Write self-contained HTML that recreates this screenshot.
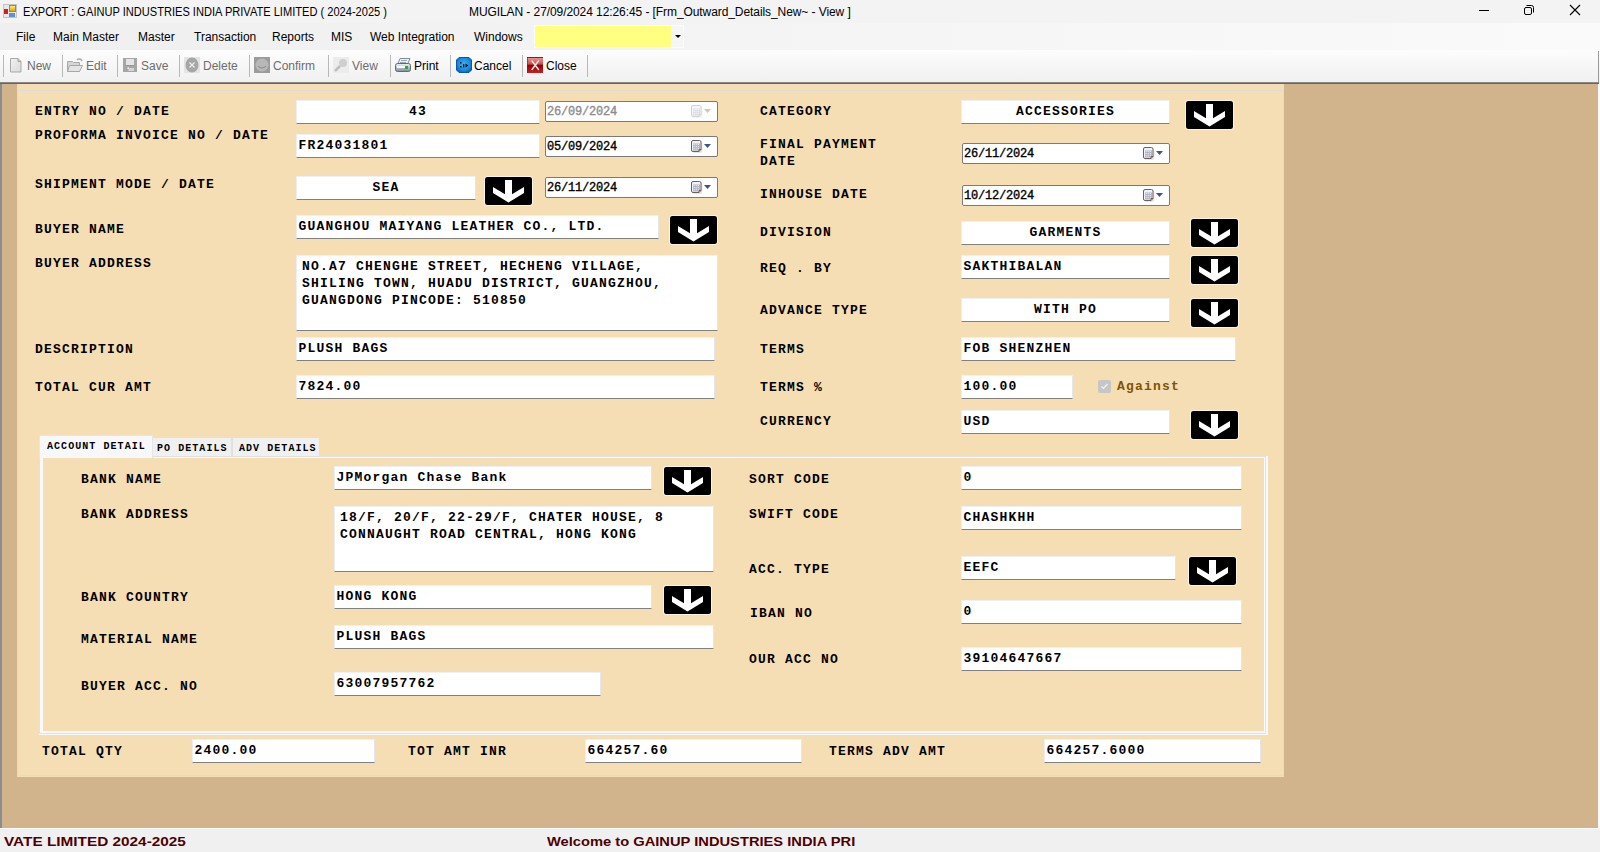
<!DOCTYPE html><html><head><meta charset="utf-8"><style>
*{box-sizing:border-box}
html,body{margin:0;padding:0;width:1600px;height:852px;overflow:hidden;background:#f0f0f0;position:relative}
div{position:absolute}
.lbl,.val{font-family:"Liberation Mono",monospace;font-weight:bold;font-size:13px;letter-spacing:1.2px;line-height:20px;white-space:pre;color:#000}
.tb{background:#fff;border-top:1px solid #eef0f3;border-left:1px solid #eceef2;border-right:1px solid #e3e7ed;border-bottom:1px solid #808080;border-radius:1px}
.btn{background:#000;background-clip:padding-box;border-radius:3px;border:1px solid rgba(255,255,255,0.6)}
.btn svg{position:absolute;left:-1px;top:-1px}
.dt{background:#fff;border:1px solid #7a7a7a;border-radius:2px}
.dtx{position:absolute;left:1px;top:0px;font-family:"Liberation Mono",monospace;font-weight:normal;-webkit-text-stroke:0.35px currentColor;font-size:12px;letter-spacing:-0.2px;line-height:20px;white-space:pre}
.cal{position:absolute;right:4px;top:3px;width:22px;height:14px}
.cal svg{display:block}
.ui{font-family:"Liberation Sans",sans-serif;font-size:12px;line-height:16px;white-space:pre;color:#000}
.ti{letter-spacing:-0.48px}
.ti2{letter-spacing:-0.08px}
.sep{width:1px;background:#b8b8b8;top:55px;height:22px}
.tbi{top:57px;width:16px;height:16px}
.tbt{top:58px;font-family:"Liberation Sans",sans-serif;font-size:12px;line-height:16px;white-space:pre}
.dis{color:#6d6d6d}
.st{font-family:"Liberation Sans",sans-serif;font-weight:bold;font-size:13px;line-height:16px;white-space:pre;color:#4e0000}
.tab{font-family:"Liberation Mono",monospace;font-weight:bold;font-size:10px;line-height:14px;white-space:pre;color:#000;letter-spacing:1.06px}
</style></head><body>

<div style="left:0;top:0;width:1600px;height:23px;background:#f3f3f3"></div>
<div style="left:3px;top:4px;width:14px;height:14px;background:#e8e8e8;border:1px solid #c4c4c4"></div>
<div style="left:9px;top:5px;width:7px;height:7px;background:linear-gradient(#ffe98a,#e0a800);border:1px solid #b98a00"></div>
<div style="left:4px;top:9px;width:4px;height:5px;background:#cc2222"></div>
<div style="left:9px;top:13px;width:6px;height:4px;background:#5b8fe0"></div>
<div class="ui" style="left:23px;top:4px;transform:scaleX(0.923);transform-origin:0 0">EXPORT : GAINUP INDUSTRIES INDIA PRIVATE LIMITED ( 2024-2025 )</div>
<div class="ui ti2" style="left:469px;top:4px">MUGILAN - 27/09/2024 12:26:45 - [Frm_Outward_Details_New~ - View ]</div>
<div style="left:1479px;top:10px;width:10px;height:1px;background:#000"></div>
<svg style="position:absolute;left:1523px;top:4px" width="12" height="12" viewBox="0 0 12 12"><rect x="1.5" y="3.5" width="7" height="7" rx="1.5" fill="none" stroke="#000"/><path d="M3.5 1.5h5a2 2 0 0 1 2 2v5" fill="none" stroke="#000"/></svg>
<svg style="position:absolute;left:1569px;top:4px" width="12" height="12" viewBox="0 0 12 12"><path d="M1 1l10 10M11 1L1 11" stroke="#000" stroke-width="1.1"/></svg>
<div style="left:0;top:23px;width:1600px;height:27px;background:linear-gradient(to right,#efefef,#fafafa)"></div>
<div class="ui" style="left:16px;top:29px">File</div>
<div class="ui" style="left:53px;top:29px">Main Master</div>
<div class="ui" style="left:138px;top:29px">Master</div>
<div class="ui" style="left:194px;top:29px">Transaction</div>
<div class="ui" style="left:272px;top:29px">Reports</div>
<div class="ui" style="left:331px;top:29px">MIS</div>
<div class="ui" style="left:370px;top:29px">Web Integration</div>
<div class="ui" style="left:474px;top:29px">Windows</div>
<div style="left:534px;top:25px;width:150px;height:23px;background:#fcfcfc"></div>
<div style="left:535px;top:26px;width:136px;height:21px;background:#ffff80"></div>
<div style="left:671px;top:26px;width:12px;height:21px;background:#f6f6f6"></div>
<svg style="position:absolute;left:675px;top:35px" width="6" height="3"><path d="M0 0h6L3 3z" fill="#000"/></svg>
<div style="left:0;top:50px;width:1600px;height:32px;background:linear-gradient(#fdfdfd,#f0f0f0)"></div>
<div style="left:0;top:82px;width:1599px;height:1px;background:#8a8a8a"></div>
<div style="left:0;top:83px;width:1599px;height:1px;background:#646464"></div>
<div style="left:1598px;top:51px;width:1px;height:31px;background:#9a9a9a"></div>
<div class="sep" style="left:3px"></div>
<div class="sep" style="left:62px"></div>
<div class="sep" style="left:117px"></div>
<div class="sep" style="left:179px"></div>
<div class="sep" style="left:249px"></div>
<div class="sep" style="left:328px"></div>
<div class="sep" style="left:390px"></div>
<div class="sep" style="left:450px"></div>
<div class="sep" style="left:522px"></div>
<div class="sep" style="left:587px"></div>
<div class="tbi" style="left:10px"><svg width="16" height="16"><defs><linearGradient id="ng" x1="0" y1="0" x2="1" y2="1"><stop offset="0" stop-color="#f2f2f2"/><stop offset="1" stop-color="#d9d9d9"/></linearGradient></defs><path d="M.5 1.5h7.5l3 3v10.5H.5z" fill="url(#ng)" stroke="#a9a9a9"/><path d="M8 1.5v3h3" fill="#cfcfcf" stroke="#a0a0a0"/></svg></div>
<div class="tbt dis" style="left:27px">New</div>
<div class="tbi" style="left:67px"><svg width="16" height="16"><path d="M.5 4.5h5l1 1h6v9h-12z" fill="#d6d6d6" stroke="#a8a8a8"/><path d="M2.5 8.5h13l-3 6h-12z" fill="#e4e4e4" stroke="#a8a8a8"/><path d="M10 3a3 3 0 0 1 5 1" stroke="#aaa" fill="none" stroke-width="1.5"/></svg></div>
<div class="tbt dis" style="left:86px">Edit</div>
<div class="tbi" style="left:123px"><svg width="16" height="16"><rect x="0" y="1" width="14" height="14" fill="#a6a6a6"/><rect x="3" y="2" width="8" height="6" fill="#e4e4e4"/><rect x="2.5" y="8" width="9" height="1" fill="#999"/><path d="M5 14l2-3h4v3z" fill="#d6d6d6"/><circle cx="5.3" cy="11.3" r="1" fill="#f4f4f4"/></svg></div>
<div class="tbt dis" style="left:141px">Save</div>
<div class="tbi" style="left:184px"><svg width="16" height="16"><rect width="16" height="16" fill="#e4e4e4"/><ellipse cx="8" cy="8" rx="6.5" ry="7.5" fill="#a6a6a6"/><path d="M5.5 5.5l5 5M10.5 5.5l-5 5" stroke="#eee" stroke-width="1.2"/></svg></div>
<div class="tbt dis" style="left:203px">Delete</div>
<div class="tbi" style="left:254px"><svg width="16" height="16"><rect width="16" height="16" fill="#9b9b9b"/><circle cx="8" cy="8" r="6.5" fill="#b8b8b8"/><path d="M4 9q4 4 8 0" stroke="#8a8a8a" fill="none"/></svg></div>
<div class="tbt dis" style="left:273px">Confirm</div>
<div class="tbi" style="left:333px"><svg width="16" height="16"><rect width="16" height="16" fill="#ececec"/><circle cx="10" cy="6" r="4" fill="#cfcfcf"/><path d="M7 9l-5 5" stroke="#bdbdbd" stroke-width="2.5"/></svg></div>
<div class="tbt dis" style="left:352px">View</div>
<div class="tbi" style="left:395px"><svg width="16" height="16"><defs><linearGradient id="pg" x1="0" y1="0" x2="0" y2="1"><stop offset="0" stop-color="#f2f5f8"/><stop offset="1" stop-color="#7f8c9c"/></linearGradient></defs><path d="M5 1.5h10l-2.5 6h-10z" fill="#eef1f5" stroke="#7d8b9b"/><path d="M6 3.5h6M5 5.5h6" stroke="#9aa6b4"/><rect x=".5" y="6.5" width="15" height="8" rx="2" fill="url(#pg)" stroke="#5d6b7b"/><rect x="2" y="9" width="8" height="2" fill="#f8fafc"/><rect x="10" y="9" width="3" height="3" fill="#1eb41e"/></svg></div>
<div class="tbt" style="left:414px">Print</div>
<div class="tbi" style="left:456px"><svg width="16" height="16"><defs><radialGradient id="cg" cx=".5" cy=".45" r=".6"><stop offset="0" stop-color="#3db2f7"/><stop offset=".7" stop-color="#168ae0"/><stop offset="1" stop-color="#0a5bb5"/></radialGradient></defs><path d="M3 .5h10l2.5 2.5v10L13 15.5H3L.5 13V3z" fill="url(#cg)" stroke="#0b56a8"/><rect x="4" y="5" width="1.5" height="1.5" fill="#111"/><rect x="4" y="9" width="1.5" height="1.5" fill="#111"/><rect x="7" y="7" width="1.3" height="3.5" fill="#111"/><path d="M9.5 6.5l3 2-3 2z" fill="#111"/></svg></div>
<div class="tbt" style="left:474px">Cancel</div>
<div class="tbi" style="left:527px"><svg width="16" height="16"><defs><linearGradient id="xg" x1="0" y1="0" x2="0" y2="1"><stop offset="0" stop-color="#f39a9a"/><stop offset=".45" stop-color="#c85050"/><stop offset=".5" stop-color="#8e0000"/><stop offset="1" stop-color="#c42424"/></linearGradient></defs><rect width="16" height="16" fill="url(#xg)"/><rect width="16" height="1" fill="#7a2424"/><rect width="1" height="16" fill="#8a1a1a" opacity=".6"/><path d="M5 4l6.5 8.5M11.5 4L5 12.5" stroke="#f0e4e4" stroke-width="1.5" stroke-linecap="round"/></svg></div>
<div class="tbt" style="left:546px">Close</div>
<div style="left:0;top:84px;width:1598px;height:744px;background:#d2b48c"></div>
<div style="left:0;top:84px;width:2px;height:744px;background:#8c8c8c"></div>
<div style="left:0;top:828px;width:1600px;height:1px;background:#fbfbfc"></div>
<div style="left:1598px;top:84px;width:2px;height:745px;background:#f8f9fb"></div>
<div class="st" style="left:4px;top:834px;transform:scaleX(1.18);transform-origin:0 0">VATE LIMITED 2024-2025</div>
<div class="st" style="left:547px;top:834px;transform:scaleX(1.13);transform-origin:0 0">Welcome to GAINUP INDUSTRIES INDIA PRI</div>
<div style="left:17px;top:84px;width:1267px;height:693px;background:#f5deb3"></div>
<div style="left:17px;top:90px;width:1267px;height:686px;border:1px solid #dcdcdc;border-right-width:1px"></div>
<div class="lbl" style="left:35px;top:102.0px">ENTRY NO / DATE</div>
<div class="lbl" style="left:35px;top:126.0px">PROFORMA INVOICE NO / DATE</div>
<div class="lbl" style="left:35px;top:175.0px">SHIPMENT MODE / DATE</div>
<div class="lbl" style="left:35px;top:220.0px">BUYER NAME</div>
<div class="lbl" style="left:35px;top:254.0px">BUYER ADDRESS</div>
<div class="lbl" style="left:35px;top:340.0px">DESCRIPTION</div>
<div class="lbl" style="left:35px;top:378.0px">TOTAL CUR AMT</div>
<div class="tb" style="left:296px;top:100px;width:244px;height:24px"></div>
<div class="val" style="left:296px;width:244px;text-align:center;top:102.0px">43</div>
<div class="dt" style="left:545px;top:101px;width:173px;height:21px"><span class="dtx" style="color:#8c8c8c">26/09/2024</span><span class="cal"><svg width="22" height="14" viewBox="0 0 22 14"><rect x="1.5" y="2" width="10" height="11" rx="2" fill="#f2f2f2"/><path d="M2 .5h6.5a1.5 1.5 0 0 1 1.5 1.5v7.5l-2 2H2A1.5 1.5 0 0 1 .5 10V2A1.5 1.5 0 0 1 2 .5z" fill="#f6f7fa" stroke="#d2d2d2"/><rect x="2" y="3.5" width="7" height="7" fill="#dcdee4"/><rect x="2.6" y="4.1" width="1" height="1" fill="#ffffff"/><rect x="2.6" y="6.2" width="1" height="1" fill="#ffffff"/><rect x="2.6" y="8.3" width="1" height="1" fill="#ffffff"/><rect x="4.7" y="4.1" width="1" height="1" fill="#ffffff"/><rect x="4.7" y="6.2" width="1" height="1" fill="#ffffff"/><rect x="4.7" y="8.3" width="1" height="1" fill="#ffffff"/><rect x="6.8" y="4.1" width="1" height="1" fill="#ffffff"/><rect x="6.8" y="6.2" width="1" height="1" fill="#ffffff"/><rect x="6.8" y="8.3" width="1" height="1" fill="#ffffff"/><path d="M8 11.5v-2h2" fill="none" stroke="#d2d2d2"/><path d="M13 4h7l-3.5 4z" fill="#c8c8c0"/></svg></span></div>
<div class="tb" style="left:296px;top:134px;width:244px;height:24px"></div>
<div class="val" style="left:298.5px;top:136.0px">FR24031801</div>
<div class="dt" style="left:545px;top:136px;width:173px;height:21px"><span class="dtx" style="color:#000">05/09/2024</span><span class="cal"><svg width="22" height="14" viewBox="0 0 22 14"><rect x="1.5" y="2" width="10" height="11" rx="2" fill="#e6e6e6"/><path d="M2 .5h6.5a1.5 1.5 0 0 1 1.5 1.5v7.5l-2 2H2A1.5 1.5 0 0 1 .5 10V2A1.5 1.5 0 0 1 2 .5z" fill="#eef2fa" stroke="#6e5f5c"/><rect x="2" y="3.5" width="7" height="7" fill="#b0b4c0"/><rect x="2.6" y="4.1" width="1" height="1" fill="#ffffff"/><rect x="2.6" y="6.2" width="1" height="1" fill="#ffffff"/><rect x="2.6" y="8.3" width="1" height="1" fill="#ffffff"/><rect x="4.7" y="4.1" width="1" height="1" fill="#ffffff"/><rect x="4.7" y="6.2" width="1" height="1" fill="#ffffff"/><rect x="4.7" y="8.3" width="1" height="1" fill="#ffffff"/><rect x="6.8" y="4.1" width="1" height="1" fill="#ffffff"/><rect x="6.8" y="6.2" width="1" height="1" fill="#ffffff"/><rect x="6.8" y="8.3" width="1" height="1" fill="#ffffff"/><path d="M8 11.5v-2h2" fill="none" stroke="#6e5f5c"/><path d="M13 4h7l-3.5 4z" fill="#3d5586"/></svg></span></div>
<div class="tb" style="left:296px;top:176px;width:180px;height:24px"></div>
<div class="val" style="left:296px;width:180px;text-align:center;top:178.0px">SEA</div>
<div class="btn" style="left:484px;top:176px;width:49px;height:30px"><svg width="49" height="30" viewBox="0 0 49 30"><path d="M21 4H28V18.3L40 11V17L24.5 26.5L9 17V11L21 18.3Z" fill="#fff"/></svg></div>
<div class="dt" style="left:545px;top:177px;width:173px;height:21px"><span class="dtx" style="color:#000">26/11/2024</span><span class="cal"><svg width="22" height="14" viewBox="0 0 22 14"><rect x="1.5" y="2" width="10" height="11" rx="2" fill="#e6e6e6"/><path d="M2 .5h6.5a1.5 1.5 0 0 1 1.5 1.5v7.5l-2 2H2A1.5 1.5 0 0 1 .5 10V2A1.5 1.5 0 0 1 2 .5z" fill="#eef2fa" stroke="#6e5f5c"/><rect x="2" y="3.5" width="7" height="7" fill="#b0b4c0"/><rect x="2.6" y="4.1" width="1" height="1" fill="#ffffff"/><rect x="2.6" y="6.2" width="1" height="1" fill="#ffffff"/><rect x="2.6" y="8.3" width="1" height="1" fill="#ffffff"/><rect x="4.7" y="4.1" width="1" height="1" fill="#ffffff"/><rect x="4.7" y="6.2" width="1" height="1" fill="#ffffff"/><rect x="4.7" y="8.3" width="1" height="1" fill="#ffffff"/><rect x="6.8" y="4.1" width="1" height="1" fill="#ffffff"/><rect x="6.8" y="6.2" width="1" height="1" fill="#ffffff"/><rect x="6.8" y="8.3" width="1" height="1" fill="#ffffff"/><path d="M8 11.5v-2h2" fill="none" stroke="#6e5f5c"/><path d="M13 4h7l-3.5 4z" fill="#3d5586"/></svg></span></div>
<div class="tb" style="left:296px;top:215px;width:363px;height:24px"></div>
<div class="val" style="left:298.5px;top:217.0px">GUANGHOU MAIYANG LEATHER CO., LTD.</div>
<div class="btn" style="left:669px;top:215px;width:49px;height:30px"><svg width="49" height="30" viewBox="0 0 49 30"><path d="M21 4H28V18.3L40 11V17L24.5 26.5L9 17V11L21 18.3Z" fill="#fff"/></svg></div>
<div class="tb" style="left:296px;top:255px;width:422px;height:76px"></div>
<div class="val" style="left:302px;top:257.0px">NO.A7 CHENGHE STREET, HECHENG VILLAGE,</div>
<div class="val" style="left:302px;top:273.8px">SHILING TOWN, HUADU DISTRICT, GUANGZHOU,</div>
<div class="val" style="left:302px;top:290.6px">GUANGDONG PINCODE: 510850</div>
<div class="tb" style="left:296px;top:337px;width:419px;height:24px"></div>
<div class="val" style="left:298.5px;top:339.0px">PLUSH BAGS</div>
<div class="tb" style="left:296px;top:375px;width:419px;height:24px"></div>
<div class="val" style="left:298.5px;top:377.0px">7824.00</div>
<div class="lbl" style="left:760px;top:102.0px">CATEGORY</div>
<div class="lbl" style="left:760px;top:135.0px">FINAL PAYMENT</div>
<div class="lbl" style="left:760px;top:152.0px">DATE</div>
<div class="lbl" style="left:760px;top:185.0px">INHOUSE DATE</div>
<div class="lbl" style="left:760px;top:223.0px">DIVISION</div>
<div class="lbl" style="left:760px;top:259.0px">REQ . BY</div>
<div class="lbl" style="left:760px;top:301.0px">ADVANCE TYPE</div>
<div class="lbl" style="left:760px;top:340.0px">TERMS</div>
<div class="lbl" style="left:760px;top:378.0px">TERMS %</div>
<div class="lbl" style="left:760px;top:412.0px">CURRENCY</div>
<div class="tb" style="left:961px;top:100px;width:209px;height:24px"></div>
<div class="val" style="left:961px;width:209px;text-align:center;top:102.0px">ACCESSORIES</div>
<div class="btn" style="left:1185px;top:100px;width:49px;height:30px"><svg width="49" height="30" viewBox="0 0 49 30"><path d="M21 4H28V18.3L40 11V17L24.5 26.5L9 17V11L21 18.3Z" fill="#fff"/></svg></div>
<div class="dt" style="left:962px;top:143px;width:208px;height:21px"><span class="dtx" style="color:#000">26/11/2024</span><span class="cal"><svg width="22" height="14" viewBox="0 0 22 14"><rect x="1.5" y="2" width="10" height="11" rx="2" fill="#e6e6e6"/><path d="M2 .5h6.5a1.5 1.5 0 0 1 1.5 1.5v7.5l-2 2H2A1.5 1.5 0 0 1 .5 10V2A1.5 1.5 0 0 1 2 .5z" fill="#eef2fa" stroke="#6e5f5c"/><rect x="2" y="3.5" width="7" height="7" fill="#b0b4c0"/><rect x="2.6" y="4.1" width="1" height="1" fill="#ffffff"/><rect x="2.6" y="6.2" width="1" height="1" fill="#ffffff"/><rect x="2.6" y="8.3" width="1" height="1" fill="#ffffff"/><rect x="4.7" y="4.1" width="1" height="1" fill="#ffffff"/><rect x="4.7" y="6.2" width="1" height="1" fill="#ffffff"/><rect x="4.7" y="8.3" width="1" height="1" fill="#ffffff"/><rect x="6.8" y="4.1" width="1" height="1" fill="#ffffff"/><rect x="6.8" y="6.2" width="1" height="1" fill="#ffffff"/><rect x="6.8" y="8.3" width="1" height="1" fill="#ffffff"/><path d="M8 11.5v-2h2" fill="none" stroke="#6e5f5c"/><path d="M13 4h7l-3.5 4z" fill="#3d5586"/></svg></span></div>
<div class="dt" style="left:962px;top:185px;width:208px;height:21px"><span class="dtx" style="color:#000">10/12/2024</span><span class="cal"><svg width="22" height="14" viewBox="0 0 22 14"><rect x="1.5" y="2" width="10" height="11" rx="2" fill="#e6e6e6"/><path d="M2 .5h6.5a1.5 1.5 0 0 1 1.5 1.5v7.5l-2 2H2A1.5 1.5 0 0 1 .5 10V2A1.5 1.5 0 0 1 2 .5z" fill="#eef2fa" stroke="#6e5f5c"/><rect x="2" y="3.5" width="7" height="7" fill="#b0b4c0"/><rect x="2.6" y="4.1" width="1" height="1" fill="#ffffff"/><rect x="2.6" y="6.2" width="1" height="1" fill="#ffffff"/><rect x="2.6" y="8.3" width="1" height="1" fill="#ffffff"/><rect x="4.7" y="4.1" width="1" height="1" fill="#ffffff"/><rect x="4.7" y="6.2" width="1" height="1" fill="#ffffff"/><rect x="4.7" y="8.3" width="1" height="1" fill="#ffffff"/><rect x="6.8" y="4.1" width="1" height="1" fill="#ffffff"/><rect x="6.8" y="6.2" width="1" height="1" fill="#ffffff"/><rect x="6.8" y="8.3" width="1" height="1" fill="#ffffff"/><path d="M8 11.5v-2h2" fill="none" stroke="#6e5f5c"/><path d="M13 4h7l-3.5 4z" fill="#3d5586"/></svg></span></div>
<div class="tb" style="left:961px;top:221px;width:209px;height:24px"></div>
<div class="val" style="left:961px;width:209px;text-align:center;top:223.0px">GARMENTS</div>
<div class="btn" style="left:1190px;top:218px;width:49px;height:30px"><svg width="49" height="30" viewBox="0 0 49 30"><path d="M21 4H28V18.3L40 11V17L24.5 26.5L9 17V11L21 18.3Z" fill="#fff"/></svg></div>
<div class="tb" style="left:961px;top:255px;width:209px;height:24px"></div>
<div class="val" style="left:963.5px;top:257.0px">SAKTHIBALAN</div>
<div class="btn" style="left:1190px;top:255px;width:49px;height:30px"><svg width="49" height="30" viewBox="0 0 49 30"><path d="M21 4H28V18.3L40 11V17L24.5 26.5L9 17V11L21 18.3Z" fill="#fff"/></svg></div>
<div class="tb" style="left:961px;top:298px;width:209px;height:24px"></div>
<div class="val" style="left:961px;width:209px;text-align:center;top:300.0px">WITH PO</div>
<div class="btn" style="left:1190px;top:298px;width:49px;height:30px"><svg width="49" height="30" viewBox="0 0 49 30"><path d="M21 4H28V18.3L40 11V17L24.5 26.5L9 17V11L21 18.3Z" fill="#fff"/></svg></div>
<div class="tb" style="left:961px;top:337px;width:275px;height:24px"></div>
<div class="val" style="left:963.5px;top:339.0px">FOB SHENZHEN</div>
<div class="tb" style="left:961px;top:375px;width:112px;height:24px"></div>
<div class="val" style="left:963.5px;top:377.0px">100.00</div>
<div style="left:1098px;top:380px;width:13px;height:13px;background:#c6c6c6;border-radius:2px"></div>
<svg style="position:absolute;left:1100px;top:382px" width="9" height="9"><path d="M1.5 4.5l2 2 4-4.5" stroke="#f4f4f4" fill="none" stroke-width="1.2"/></svg>
<div class="lbl" style="left:1117px;top:377px;color:#7f5406">Against</div>
<div class="tb" style="left:961px;top:410px;width:209px;height:24px"></div>
<div class="val" style="left:963.5px;top:412.0px">USD</div>
<div class="btn" style="left:1190px;top:410px;width:49px;height:30px"><svg width="49" height="30" viewBox="0 0 49 30"><path d="M21 4H28V18.3L40 11V17L24.5 26.5L9 17V11L21 18.3Z" fill="#fff"/></svg></div>
<div style="left:39px;top:456px;width:1229px;height:279px;background:#f9f9fb"></div>
<div style="left:39px;top:456px;width:1227px;height:278px;border:1px solid #e2e2e2"></div>
<div style="left:43px;top:458px;width:1221px;height:273px;background:#f5deb3"></div>
<div style="left:39px;top:435px;width:114px;height:23px;background:#f8f8fa;border:1px solid #e6e6e8;border-bottom:none"></div>
<div style="left:153px;top:437px;width:79px;height:20px;background:#f0f0f0;border:1px solid #e0e0e0;border-left:none"></div>
<div style="left:232px;top:437px;width:88px;height:20px;background:#f0f0f0;border:1px solid #e0e0e0"></div>
<div class="tab" style="left:47px;top:439.5px">ACCOUNT DETAIL</div>
<div class="tab" style="left:157px;top:442px">PO DETAILS</div>
<div class="tab" style="left:239px;top:442px">ADV DETAILS</div>
<div class="lbl" style="left:81px;top:470.0px">BANK NAME</div>
<div class="lbl" style="left:81px;top:505.0px">BANK ADDRESS</div>
<div class="lbl" style="left:81px;top:588.0px">BANK COUNTRY</div>
<div class="lbl" style="left:81px;top:630.0px">MATERIAL NAME</div>
<div class="lbl" style="left:81px;top:677.0px">BUYER ACC. NO</div>
<div class="tb" style="left:334px;top:466px;width:318px;height:24px"></div>
<div class="val" style="left:336.5px;top:468.0px">JPMorgan Chase Bank</div>
<div class="btn" style="left:663px;top:466px;width:49px;height:30px"><svg width="49" height="30" viewBox="0 0 49 30"><path d="M21 4H28V18.3L40 11V17L24.5 26.5L9 17V11L21 18.3Z" fill="#fff"/></svg></div>
<div class="tb" style="left:334px;top:506px;width:380px;height:66px"></div>
<div class="val" style="left:340px;top:508.0px">18/F, 20/F, 22-29/F, CHATER HOUSE, 8</div>
<div class="val" style="left:340px;top:524.8px">CONNAUGHT ROAD CENTRAL, HONG KONG</div>
<div class="tb" style="left:334px;top:585px;width:318px;height:24px"></div>
<div class="val" style="left:336.5px;top:587.0px">HONG KONG</div>
<div class="btn" style="left:663px;top:585px;width:49px;height:30px"><svg width="49" height="30" viewBox="0 0 49 30"><path d="M21 4H28V18.3L40 11V17L24.5 26.5L9 17V11L21 18.3Z" fill="#fff"/></svg></div>
<div class="tb" style="left:334px;top:625px;width:380px;height:24px"></div>
<div class="val" style="left:336.5px;top:627.0px">PLUSH BAGS</div>
<div class="tb" style="left:334px;top:672px;width:267px;height:24px"></div>
<div class="val" style="left:336.5px;top:674.0px">63007957762</div>
<div class="lbl" style="left:749px;top:470.0px">SORT CODE</div>
<div class="lbl" style="left:749px;top:505.0px">SWIFT CODE</div>
<div class="lbl" style="left:749px;top:560.0px">ACC. TYPE</div>
<div class="lbl" style="left:750px;top:604.0px">IBAN NO</div>
<div class="lbl" style="left:749px;top:650.0px">OUR ACC NO</div>
<div class="tb" style="left:961px;top:466px;width:281px;height:24px"></div>
<div class="val" style="left:963.5px;top:468.0px">0</div>
<div class="tb" style="left:961px;top:506px;width:281px;height:24px"></div>
<div class="val" style="left:963.5px;top:508.0px">CHASHKHH</div>
<div class="tb" style="left:961px;top:556px;width:215px;height:24px"></div>
<div class="val" style="left:963.5px;top:558.0px">EEFC</div>
<div class="btn" style="left:1188px;top:556px;width:49px;height:30px"><svg width="49" height="30" viewBox="0 0 49 30"><path d="M21 4H28V18.3L40 11V17L24.5 26.5L9 17V11L21 18.3Z" fill="#fff"/></svg></div>
<div class="tb" style="left:961px;top:600px;width:281px;height:24px"></div>
<div class="val" style="left:963.5px;top:602.0px">0</div>
<div class="tb" style="left:961px;top:647px;width:281px;height:24px"></div>
<div class="val" style="left:963.5px;top:649.0px">39104647667</div>
<div class="lbl" style="left:42px;top:742.0px">TOTAL QTY</div>
<div class="lbl" style="left:408px;top:742.0px">TOT AMT INR</div>
<div class="lbl" style="left:829px;top:742.0px">TERMS ADV AMT</div>
<div class="tb" style="left:192px;top:739px;width:183px;height:24px"></div>
<div class="val" style="left:194.5px;top:741.0px">2400.00</div>
<div class="tb" style="left:585px;top:739px;width:217px;height:24px"></div>
<div class="val" style="left:587.5px;top:741.0px">664257.60</div>
<div class="tb" style="left:1044px;top:739px;width:217px;height:24px"></div>
<div class="val" style="left:1046.5px;top:741.0px">664257.6000</div>
</body></html>
